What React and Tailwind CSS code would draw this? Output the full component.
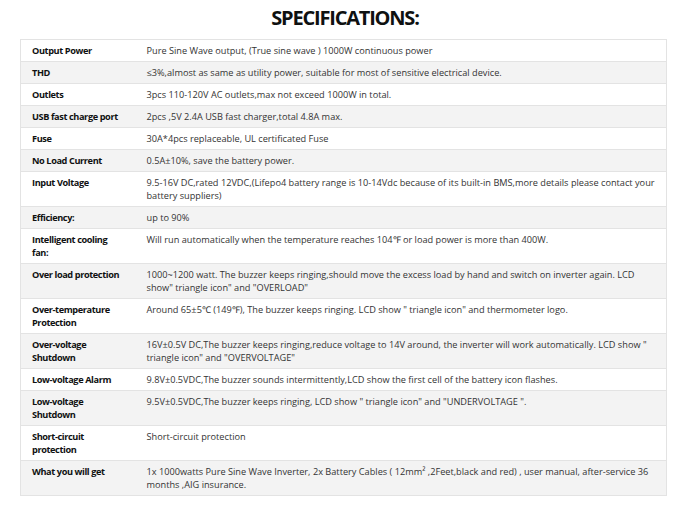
import React from 'react';

const SPECS = [
  ['Output Power', 'Pure Sine Wave output, (True sine wave ) 1000W continuous power'],
  ['THD', '≤3%,almost as same as utility power, suitable for most of sensitive electrical device.'],
  ['Outlets', '3pcs 110-120V AC outlets,max not exceed 1000W in total.'],
  ['USB fast charge port', '2pcs ,5V 2.4A USB fast charger,total 4.8A max.'],
  ['Fuse', '30A*4pcs replaceable, UL certificated Fuse'],
  ['No Load Current', '0.5A±10%, save the battery power.'],
  ['Input Voltage', '9.5-16V DC,rated 12VDC,(Lifepo4 battery range is 10-14Vdc because of its built-in BMS,more details please contact your battery suppliers)'],
  ['Efficiency:', 'up to 90%'],
  ['Intelligent cooling fan:', 'Will run automatically when the temperature reaches 104℉ or load power is more than 400W.'],
  ['Over load protection', '1000~1200 watt. The buzzer keeps ringing,should move the excess load by hand and switch on inverter again. LCD show" triangle icon" and "OVERLOAD"'],
  ['Over-temperature Protection', 'Around 65±5℃ (149℉), The buzzer keeps ringing. LCD show " triangle icon" and thermometer logo.'],
  ['Over-voltage Shutdown', '16V±0.5V DC,The buzzer keeps ringing,reduce voltage to 14V around, the inverter will work automatically. LCD show " triangle icon" and "OVERVOLTAGE"'],
  ['Low-voltage Alarm', '9.8V±0.5VDC,The buzzer sounds intermittently,LCD show the first cell of the battery icon flashes.'],
  ['Low-voltage Shutdown', '9.5V±0.5VDC,The buzzer keeps ringing, LCD show " triangle icon" and "UNDERVOLTAGE ".'],
  ['Short-circuit protection', 'Short-circuit protection'],
  ['What you will get', '1x 1000watts Pure Sine Wave Inverter, 2x Battery Cables ( 12mm² ,2Feet,black and red) , user manual, after-service 36 months ,AIG insurance.'],
];

export default function App() {
  return (
    <div className="w-[690px] h-[512px] bg-white font-['Open_Sans',sans-serif] overflow-hidden">
      <h2 className="text-center text-[20px] leading-[26px] font-bold text-[#0f1111] tracking-[-1.2px] pt-[5px] pb-[8px]">
        SPECIFICATIONS:
      </h2>
      <table className="ml-[20px] w-[647px] table-fixed border-collapse border border-[#e3e3e3] text-[9.2px] leading-[13px]">
        <colgroup>
          <col className="w-[116px]" />
          <col />
        </colgroup>
        <tbody>
          {SPECS.map(([label, value], i) => (
            <tr key={label} className={i % 2 === 0 ? 'bg-white' : 'bg-[#f3f3f3]'}>
              <td className="align-top border-t border-[#e3e3e3] pl-[11px] pr-[15px] py-[4px] font-bold tracking-[-0.4px] text-[#0f1111]">
                {label}
              </td>
              <td className="align-top border-t border-[#e3e3e3] pl-[10px] pr-[10px] py-[4px] text-[#333333]">
                {value}
              </td>
            </tr>
          ))}
        </tbody>
      </table>
    </div>
  );
}
